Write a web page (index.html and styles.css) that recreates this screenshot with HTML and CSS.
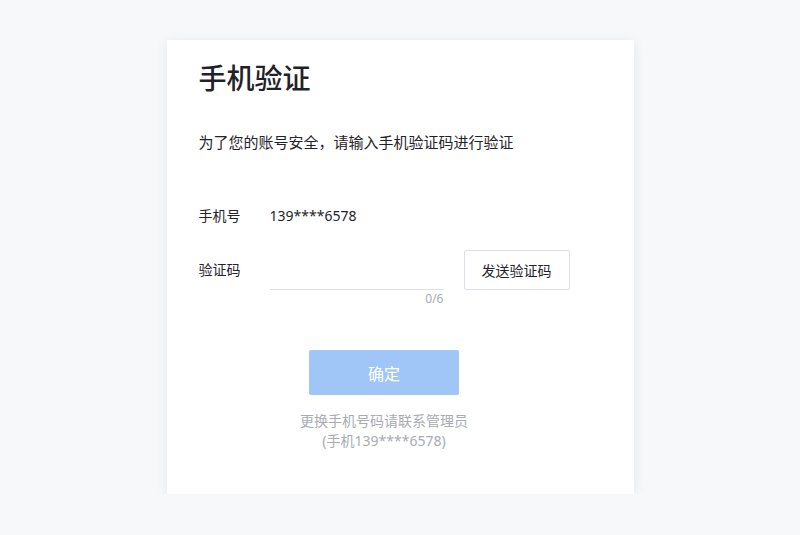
FILE: index.html
```html
<!DOCTYPE html>
<html lang="zh-CN">
<head>
  <meta charset="UTF-8" />
  <meta name="viewport" content="width=device-width, initial-scale=1.0"/>
  <title>手机验证</title>
  <link rel="stylesheet" href="styles.css">
</head>
<body>
  <div class="card">
    <h1 class="title">手机验证</h1>
    <p class="tip">为了您的账号安全，请输入手机验证码进行验证</p>

    <div class="form">
      <div class="row phone-row">
        <span class="label">手机号</span>
        <span class="value">139****6578</span>
      </div>

      <div class="row code-row">
        <span class="label">验证码</span>
        <div class="code-field">
          <input class="code-input" type="text" maxlength="6" />
          <span class="counter">0/6</span>
        </div>
        <button class="send-btn">发送验证码</button>
      </div>

      <div class="actions">
        <button class="submit-btn">确定</button>
        <p class="note">更换手机号码请联系管理员<br>(手机139****6578)</p>
      </div>
    </div>
  </div>
</body>
</html>
```

FILE: styles.css
```css
body {
  margin: 0;
  background: #f7f8fa;
  font-family: "Noto Sans", "Noto Sans CJK SC", sans-serif;
  color: #1f2329;
}

.card {
  width: 467px;
  margin: 40px auto 0;
  padding: 20px 32px 43px;
  box-sizing: border-box;
  background: #ffffff;
  box-shadow: 0 2px 12px rgba(0, 0, 0, 0.08);
}

.title {
  margin: 0;
  font-size: 28px;
  line-height: 36px;
  font-weight: 500;
  color: #1f2329;
}

.tip {
  margin: 35px 0 0;
  font-size: 15px;
  line-height: 22px;
  color: #1f2329;
}

.form {
  width: 371px;
}

.row {
  display: flex;
  font-size: 14px;
}

.label {
  width: 71px;
  flex-shrink: 0;
}

.phone-row {
  margin-top: 52px;
  line-height: 22px;
}

.code-row {
  margin-top: 23px;
  align-items: flex-start;
}

.code-row .label {
  line-height: 40px;
}

.code-field {
  width: 174px;
  display: flex;
  flex-direction: column;
}

.code-input {
  height: 40px;
  box-sizing: border-box;
  border: none;
  border-bottom: 1px solid #dcdfe6;
  outline: none;
  padding: 0;
  font-size: 14px;
  font-family: inherit;
}

.counter {
  margin-top: 1px;
  text-align: right;
  font-size: 12px;
  line-height: 16px;
  color: #a8abb2;
}

.send-btn {
  margin-left: 20px;
  width: 106px;
  height: 40px;
  border: 1px solid #dcdfe6;
  border-radius: 2px;
  background: #ffffff;
  font-size: 14px;
  font-family: inherit;
  color: #1f2329;
}

.actions {
  margin-top: 43px;
  display: flex;
  flex-direction: column;
  align-items: center;
}

.submit-btn {
  width: 150px;
  height: 45px;
  border: none;
  border-radius: 2px;
  background: #a0c6f8;
  color: #ffffff;
  font-size: 16px;
  font-family: inherit;
}

.note {
  margin: 16px 0 0;
  text-align: center;
  font-size: 14px;
  line-height: 20px;
  color: #a8abb2;
}
```
